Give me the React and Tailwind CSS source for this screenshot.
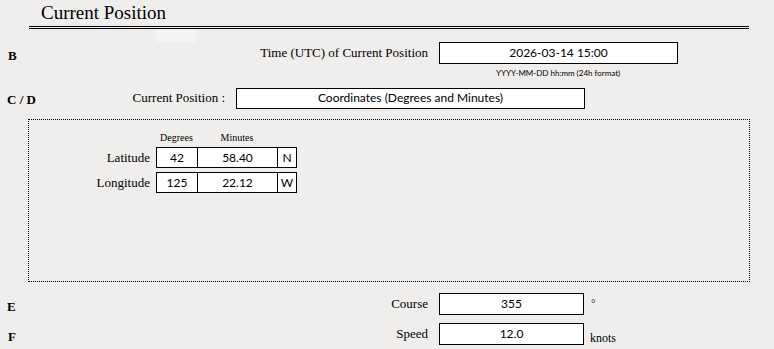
export default function App() {
  const serif = "font-['Liberation_Serif',serif]";
  const sans = "font-['Lato',sans-serif]";
  return (
    <div className={`w-[774px] h-[349px] bg-[#efeeec] overflow-hidden text-black ${serif}`}>
      <div className="pl-[41px] pt-[2px] h-[26px] text-[19px] leading-[22px]">Current Position</div>
      <div className="ml-[29px] w-[720px] h-[3px] border-y border-black"></div>
      <div className="ml-[156px] w-[40px] h-[13px] bg-[#f4f4f4]"></div>
      {/* Row B */}
      <div className="flex items-center h-[22px]">
        <div className="w-[428px] flex items-center">
          <div className="pl-[8px] pt-[6px] font-bold text-[13px]">B</div>
          <div className="flex-1 text-right text-[13px]">Time (UTC) of Current Position</div>
        </div>
        <div className={`ml-[11px] w-[239px] h-[22px] border border-black bg-white flex items-center justify-center text-[12px] ${sans}`}>
          2026-03-14 15:00
        </div>
      </div>
      <div className={`ml-[496px] mt-[2px] h-[14px] text-[8px] leading-[14px] ${sans}`}>YYYY-MM-DD hh:mm (24h format)</div>
      {/* Row C/D */}
      <div className="flex items-center h-[20px] mt-[8px]">
        <div className="w-[225px] flex items-center">
          <div className="pl-[7px] pt-[4px] font-bold text-[13px]">C / D</div>
          <div className="flex-1 text-right text-[13px]">Current Position :</div>
        </div>
        <div className={`ml-[11px] w-[349px] h-[21px] border border-black bg-white flex items-center justify-center text-[12px] ${sans}`}>
          Coordinates (Degrees and Minutes)
        </div>
      </div>
      {/* Dotted box */}
      <div className="ml-[28px] mt-[11px] w-[722px] h-[163px] border border-dotted border-black">
        <div className="flex mt-[9px] text-[10px] leading-[18px]">
          <div className="w-[127px]"></div>
          <div className="w-[41px] text-center">Degrees</div>
          <div className="w-[80px] text-center">Minutes</div>
        </div>
        {[
          ["Latitude", "42", "58.40", "N"],
          ["Longitude", "125", "22.12", "W"],
        ].map((r, i) => (
          <div key={i} className={`flex items-center ${i ? "mt-[4px]" : ""}`}>
            <div className="w-[121px] text-right text-[13px] pr-0">{r[0]}</div>
            <div className="ml-[6px] flex h-[21px] border border-black bg-white text-[12px]">
              <div className={`w-[40px] flex items-center justify-center ${sans}`}>{r[1]}</div>
              <div className={`w-[80px] border-l border-black flex items-center justify-center ${sans}`}>{r[2]}</div>
              <div className={`w-[19px] border-l border-black flex items-center justify-center ${sans}`}>{r[3]}</div>
            </div>
          </div>
        ))}
      </div>
      {/* Row E */}
      <div className="flex items-center h-[22px] mt-[11px]">
        <div className="w-[428px] flex items-center">
          <div className="pl-[7px] pt-[6px] font-bold text-[13px]">E</div>
          <div className="flex-1 text-right text-[13px]">Course</div>
        </div>
        <div className={`ml-[11px] w-[145px] h-[22px] border border-black bg-white flex items-center justify-center text-[12px] ${sans}`}>
          355
        </div>
        <div className="ml-[7px] text-[11px] pb-[2px]">°</div>
      </div>
      {/* Row F */}
      <div className="flex items-center h-[22px] mt-[8px]">
        <div className="w-[428px] flex items-center">
          <div className="pl-[8px] pt-[6px] font-bold text-[13px]">F</div>
          <div className="flex-1 text-right text-[13px]">Speed</div>
        </div>
        <div className={`ml-[11px] w-[145px] h-[22px] border border-black bg-white flex items-center justify-center text-[12px] ${sans}`}>
          12.0
        </div>
        <div className="ml-[6px] pt-[8px] text-[12px]">knots</div>
      </div>
    </div>
  );
}
